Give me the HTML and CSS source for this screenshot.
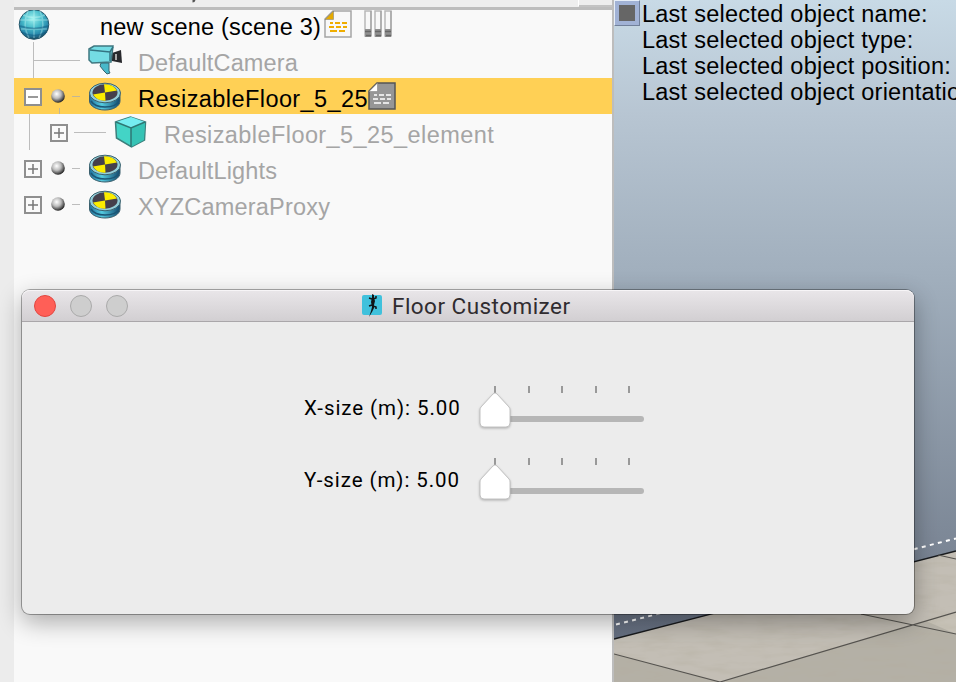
FILE: index.html
```html
<!DOCTYPE html>
<html lang="en">
<head>
<meta charset="utf-8">
<title>Floor Customizer</title>
<link rel="stylesheet" href="styles.css">
</head>
<body>
<svg class="defs" width="0" height="0" aria-hidden="true">
  <defs>
    <radialGradient id="ball" cx=".4" cy=".35" r=".65"><stop offset="0" stop-color="#fff"/><stop offset=".5" stop-color="#bbb"/><stop offset=".85" stop-color="#555"/><stop offset="1" stop-color="#222"/></radialGradient>
    <radialGradient id="world" cx=".45" cy=".3" r=".7"><stop offset="0" stop-color="#9cf0ee"/><stop offset=".45" stop-color="#48bccb"/><stop offset=".8" stop-color="#2686aa"/><stop offset="1" stop-color="#17455e"/></radialGradient>
    <linearGradient id="rim" x1="0" x2="1"><stop offset="0" stop-color="#1f6f9b"/><stop offset=".4" stop-color="#55cbe0"/><stop offset="1" stop-color="#12486d"/></linearGradient>
    <g id="plus"><rect x="1" y="1" width="16" height="16" fill="#fafafa" stroke="#8f8f8f" stroke-width="2"/><path d="M4 9h10M9 4v10" stroke="#777" stroke-width="1.500"/></g>
    <g id="minus"><rect x="1" y="1" width="16" height="16" fill="#fff" stroke="#8f8f8f" stroke-width="2"/><path d="M4 9h10" stroke="#777" stroke-width="1.500"/></g>
    <g id="disc">
      <path d="M1.500 12v7c0 5 7 9 15.500 9s15-4 15-9v-7z" fill="url(#rim)" stroke="#3b5f6d"/>
      <path d="M3 19c3 5 8 6 14 6s12-2 14-6" fill="none" stroke="#1c5675" stroke-width="1.500"/>
      <ellipse cx="17" cy="11" rx="15.500" ry="9.800" fill="#93cfd9" stroke="#3b616e"/>
      <ellipse cx="17" cy="10.500" rx="12.500" ry="8.300" fill="#45404b"/>
      <path d="M17 10.500L16 2.200Q25 1.800 29 8.500zM17 10.500L17.500 18.700Q9 19 5 12.500z" fill="#fbed00"/>
    </g>
    <g id="page">
      <path d="M9 1h18v26H1V9z" class="sheet" stroke-width="1.500"/>
      <path d="M9.500 1v8.500H1z" class="fold"/>
      <path d="M6 13h3m2 0h5m2 0h5M5 17h5m2 0h5m2 0h4M6 21h7m2 0h6" class="ink" stroke-width="2"/>
    </g>
  </defs>
</svg>

<main class="app">
  <aside class="gutter"></aside>
  <section class="hierarchy">
    <header class="panel-head"><svg width="598" height="7"><path d="M178.500 0h3l-1 2-2 .5z" fill="#555"/><path d="M564.500 0v6" stroke="#fff"/><path d="M565 6h33" stroke="#999"/></svg></header>
    <div class="row first">
      <svg class="lead" width="86" height="32" viewBox="0 4 86 32">
        <circle cx="20" cy="18.500" r="14.800" fill="url(#world)" stroke="#27576a"/>
        <path d="M6 14h28M7 23h26M14 5c-4 9-4 18 1 27M26 5c4 9 4 18-1 27M20 4v28M9 9q11 5 22 0" fill="none" stroke="#d2fbf9" stroke-opacity=".35" stroke-width="1.500"/>
        <path d="M7 26q13 7 26 0M6 20q14 5 28 0" fill="none" stroke="#125a80" stroke-opacity=".5" stroke-width="1.500"/>
      </svg>
      <span class="scene-name">new scene (scene 3)</span>
      <svg class="page amber" width="28" height="28" viewBox="0 0 28 28"><use href="#page"/></svg>
      <svg class="tubes" width="28" height="28" viewBox="0 0 28 28">
        <g fill="#f8f8f8" stroke="#b8b8b8" stroke-width="1.500"><path d="M1 1h6v25H1zM11 1h6v25h-6zM21 1h6v25h-6z"/></g>
        <path d="M7 1v25M17 1v25M27 1v25" stroke="#999"/>
        <path d="M1 19h6v8H1zM11 19h6v8h-6zM21 19h6v8h-6z" fill="#909090"/>
        <path d="M1 21.500h6m4 0h6m4 0h6M2 25.500h5m5 0h5m5 0h5" stroke="#666" stroke-width="1.500"/>
      </svg>
    </div>
    <div class="row">
      <svg class="lead" width="124" height="36">
        <path d="M19.500 0v36M20 18.500h46" stroke="#bdbdbd"/>
        <path d="M98 11l9-3 1 13-10-2z" fill="#28292d"/><path d="M102 12v6" stroke="#aaa" stroke-width="2"/>
        <path d="M87 21h8v8l1 2-3 1-3-3-4-5z" fill="#48b8c9" stroke="#39646e"/>
        <path d="M75 7l5-3h19l-2 16-19 1-3-3z" fill="#74dce4" stroke="#3f7780" stroke-width="1.500"/>
        <path d="M76 8l20 2 3-5M96 10v9" fill="none" stroke="#347482" stroke-width="1.500"/>
      </svg>
      <span class="name muted camera">DefaultCamera</span>
    </div>
    <div class="row selected">
      <svg class="lead" width="124" height="36">
        <use href="#minus" x="10" y="10"/><circle cx="44" cy="18" r="6.800" fill="url(#ball)"/>
        <path d="M58 18.500h8M45.500 30v6" stroke="#c2b695"/><use href="#disc" x="74" y="4"/>
      </svg>
      <span class="name wide">ResizableFloor_5_25</span>
      <svg class="page gray" width="28" height="28" viewBox="0 0 28 28"><use href="#page"/></svg>
    </div>
    <div class="row">
      <svg class="lead" width="150" height="36">
        <path d="M15.500 0v36M60 18.500h32" stroke="#bdbdbd"/><use href="#plus" x="36" y="10"/>
        <path d="M101.500 8l15-5 15 5-1 18-13 7-15-9z" fill="#43d4c6" stroke="#3c7f7c" stroke-width="1.500"/>
        <path d="M102 8l15-5 14 5-14 6z" fill="#75edf1"/><path d="M117 14l14-6-1 18-13 7z" fill="#36c3b5"/>
        <path d="M102 8l15 6 14-6M117 14v19" fill="none" stroke="#2f7774" stroke-width="1.500"/>
      </svg>
      <span class="name muted wide">ResizableFloor_5_25_element</span>
    </div>
    <div class="row">
      <svg class="lead" width="124" height="36"><use href="#plus" x="10" y="10"/><circle cx="44" cy="18" r="6.800" fill="url(#ball)"/><path d="M58 18.500h8" stroke="#bdbdbd"/><use href="#disc" x="74" y="4"/></svg>
      <span class="name muted lights-name">DefaultLights</span>
    </div>
    <div class="row">
      <svg class="lead" width="124" height="36"><use href="#plus" x="10" y="10"/><circle cx="44" cy="18" r="6.800" fill="url(#ball)"/><path d="M58 18.500h8" stroke="#bdbdbd"/><use href="#disc" x="74" y="4"/></svg>
      <span class="name muted">XYZCameraProxy</span>
    </div>
  </section>

  <section class="viewport">
    <svg class="scene" width="342" height="682" viewBox="0 0 342 682">
      <defs>
        <linearGradient id="sky" x1="0" y1="0" x2="0" y2="1"><stop offset="0" stop-color="#c8dae6"/><stop offset=".17" stop-color="#b7c5d2"/><stop offset=".4" stop-color="#a1afbd"/><stop offset=".8" stop-color="#7c8796"/><stop offset="1" stop-color="#596275"/></linearGradient>
        <filter id="grain" x="0" y="0" width="1" height="1"><feTurbulence type="fractalNoise" baseFrequency=".035 .16" numOctaves="3" seed="4"/><feColorMatrix values="0 0 0 0 .45  0 0 0 0 .42  0 0 0 0 .34  .7 0 0 0 -.28"/></filter>
        <clipPath id="floor"><path d="M0 639L342 551V682H0z"/></clipPath>
      </defs>
      <rect width="342" height="682" fill="url(#sky)"/>
      <g clip-path="url(#floor)">
        <rect y="540" width="342" height="142" fill="#c3beb5"/>
        <path d="M0 654l106 28H0zM106 682l236-70v70z" fill="#b4b0a6"/>
        <path d="M312 621l30-9v22z" fill="#c6c1b6"/>
        <rect y="540" width="342" height="142" filter="url(#grain)"/>
      </g>
      <path d="M0 639L342 551" stroke="#181a1d" stroke-width="1.300"/>
      <path d="M0 654l106 28 236-70M247 614l95 20M324 555l18 4" fill="none" stroke="#55534f" stroke-width="1.200"/>
      <path d="M2 624.500L342 538.500" stroke="#fff" stroke-width="2" stroke-dasharray="4 4.300"/>
    </svg>
    <div class="overlay">
      <i class="toggle"></i>
      <div class="info">
        <div>Last selected object name:</div>
        <div>Last selected object type:</div>
        <div>Last selected object position:</div>
        <div>Last selected object orientation:</div>
      </div>
    </div>
  </section>
</main>

<section class="dialog">
  <header class="titlebar">
    <div class="lights"><i class="close"></i><i></i><i></i></div>
    <svg width="20" height="24" viewBox="0 0 20 24">
      <rect y="1" width="20" height="20" rx="2" fill="#40c1dc"/>
      <path d="M10 0l2 1v3l1 3-1 4v3l-2 4-3 5 2-6 1-4-1-5 1-5z" fill="#101416"/>
      <path d="M11 5l3-1V2M10 5L7 4M11 12l3 1v2M10 11l-3 1" fill="none" stroke="#101416" stroke-width="1.500"/>
    </svg>
    <h1>Floor Customizer</h1>
  </header>
  <div class="form">
    <div class="field">
      <span class="label">X-size (m): 5.00</span>
      <svg class="slider" width="172" height="52" viewBox="0 0 172 52">
        <path d="M19 6v7M53 6v7M86 6v7M120 6v7M153 6v7" stroke="#999" stroke-width="2"/>
        <path d="M20 39H165" stroke="#b6b6b6" stroke-width="6" stroke-linecap="round"/>
        <path class="thumb" d="M19 13q1 0 2 1l12 13q1 1 1 3v13q0 4-4 4H8q-4 0-4-4V30q0-2 1-3l12-13q1-1 2-1z"/>
      </svg>
    </div>
    <div class="field">
      <span class="label">Y-size (m): 5.00</span>
      <svg class="slider" width="172" height="52" viewBox="0 0 172 52">
        <path d="M19 6v7M53 6v7M86 6v7M120 6v7M153 6v7" stroke="#999" stroke-width="2"/>
        <path d="M20 39H165" stroke="#b6b6b6" stroke-width="6" stroke-linecap="round"/>
        <path class="thumb" d="M19 13q1 0 2 1l12 13q1 1 1 3v13q0 4-4 4H8q-4 0-4-4V30q0-2 1-3l12-13q1-1 2-1z"/>
      </svg>
    </div>
  </div>
</section>
</body>
</html>
```
FILE: styles.css
```css
* { box-sizing: border-box; }
body { margin: 0; width: 956px; height: 682px; overflow: hidden; font-family: "Liberation Sans", Arial, sans-serif; }
svg { display: block; flex: none; }
.defs { position: absolute; }
.app { display: flex; height: 682px; }
.gutter { width: 14px; background: #ececec; }
.hierarchy { width: 600px; background: #f9f9f9; border-right: 2px solid #bdbdbd; }
.panel-head { height: 10px; background: #eee; border-bottom: 3px solid #bdbdbd; }
.row { display: flex; height: 36px; font-size: 23.500px; line-height: 36px; white-space: nowrap; color: #000; }
.row.first { height: 32px; line-height: 34px; }
.row.selected { background: #ffd055; }
.name { padding-top: 3px; letter-spacing: .2px; }
.wide { letter-spacing: .42px; }
.lights-name, .camera { letter-spacing: .15px; }
.muted { color: #a5a5a5; }
.scene-name { width: 224px; letter-spacing: .22px; }
.page { margin-top: 4px; }
.row.first .page { margin-top: 0; }
.tubes { margin-left: 12px; }
.selected .page { margin-left: 0; }
.amber { fill: #f8f8f8; stroke: #a5a5a5; --fold: #e5aa00; --ink: #efad00; }
.gray { fill: #969696; stroke: #555; --fold: #fff; --ink: #e6e6e6; }
.fold { fill: var(--fold); stroke: #777; stroke-width: .5; }
.ink { stroke: var(--ink); }
.viewport { display: grid; width: 342px; overflow: hidden; }
.scene, .overlay { grid-area: 1 / 1; }
.overlay { display: flex; z-index: 1; height: 120px; }
.toggle { flex: none; width: 26px; height: 26px; padding: 4px; border: 1px solid; border-color: #e6eef8 #71809a #71809a #e6eef8; background: #666 content-box; box-shadow: inset 0 0 0 4px #a1b2d5; }
.info { padding: 1px 0 0 2px; font-size: 23.500px; letter-spacing: .24px; line-height: 26px; white-space: nowrap; color: #000; }
.dialog { position: absolute; left: 22px; top: 290px; width: 892px; height: 324px; border-radius: 8px; background: #ececec; box-shadow: 0 0 0 1px rgba(0,0,0,.32), 0 8px 24px rgba(0,0,0,.32); }
.titlebar { display: grid; grid-template-columns: 340px 20px auto; align-items: center; height: 32px; border-radius: 8px 8px 0 0; border-bottom: 1px solid #aaa7aa; background: linear-gradient(#e9e6e9, #d2cfd2); box-shadow: inset 0 1px #f7f5f7; }
.lights { display: flex; gap: 14px; padding-left: 12px; }
.lights i { width: 22px; height: 22px; border: 1px solid #aaa; border-radius: 50%; background: #cecece; }
.lights .close { background: #ff5f57; border-color: #e24640; }
h1 { margin: 0 0 0 10px; font: 400 22.500px/30px Roboto, sans-serif; letter-spacing: .46px; color: #302c30; }
.form { display: flex; flex-direction: column; gap: 20px; padding: 58px 0 0 282px; }
.field { display: flex; height: 52px; align-items: center; }
.label { width: 172px; padding-top: 4px; font: 20.500px/24px Roboto, sans-serif; letter-spacing: .93px; color: #000; white-space: nowrap; }
.thumb { fill: #fff; stroke: #c2c2c2; stroke-width: 1; filter: drop-shadow(0 1px 1px rgba(0,0,0,.25)); }
```
